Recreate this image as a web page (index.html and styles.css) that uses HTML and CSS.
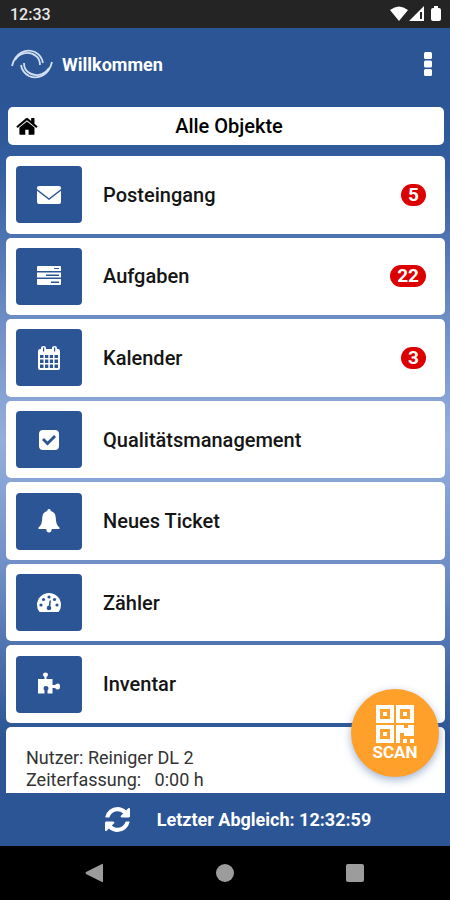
FILE: index.html
```html
<!DOCTYPE html>
<html lang="de">
<head>
<meta charset="utf-8">
<meta name="viewport" content="width=device-width, initial-scale=1">
<title>Willkommen</title>
<link rel="stylesheet" href="styles.css">
</head>
<body>
<div class="status">
  <span>12:33</span>
  <svg class="status-icons" viewBox="0 0 52 18" aria-hidden="true">
    <path d="M0 5Q9-2 18 5L9 16Z"/>
    <path fill-rule="evenodd" d="M34 1V16H19ZM30 7V14H32V7Z"/>
    <path d="M41 3H44V1H48V3H49Q51 3 51 5V14Q51 16 49 16H43Q41 16 41 14V5Q41 3 43 3Z"/>
  </svg>
</div>
<header class="header">
  <svg class="logo" viewBox="0 0 42 30" aria-hidden="true">
    <path d="M1 17C4 4 15-1 24 3Q31 7 32 14" stroke-width="1.8"/>
    <path d="M4 11C9 3 19 2 25 7Q29 10 29 16" stroke-width="1.8"/>
    <path d="M41 13C38 26 27 31 18 27Q11 23 10 16" stroke-width="1.800"/>
    <path d="M38 19C33 27 23 28 17 23Q13 20 13 14" stroke-width="1.800"/>
  </svg>
  <h1 class="title">Willkommen</h1>
  <button class="more" aria-label="Menü"><svg viewBox="0 0 8 24" aria-hidden="true"><rect width="8" height="7" rx="1.5"/><rect y="8.500" width="8" height="7" rx="1.500"/><rect y="17" width="8" height="7" rx="1.500"/></svg></button>
</header>
<main class="main">
  <button class="objects">
    <svg class="home" viewBox="60 190 1680 1350" aria-hidden="true"><path d="M1472 992v480q0 26-19 45t-45 19h-384v-384h-256v384h-384q-26 0-45-19t-19-45v-480q0-1 .5-3t.5-3l575-474 575 474q1 2 1 6zm223-69l-62 74q-8 9-21 11h-3q-13 0-21-7l-692-577-692 577q-12 8-24 7-13-2-21-11l-62-74q-8-10-7-23.500t11-21.500l719-599q32-26 76-26t76 26l244 204v-195q0-14 9-23t23-9h192q14 0 23 9t9 23v408l219 182q10 8 11 21.500t-7 23.500z"/></svg>
    <span>Alle Objekte</span>
  </button>
  <nav class="list">
    <a class="card" href="#posteingang">
      <span class="tile"><svg viewBox="0 0 24 24" aria-hidden="true"><path d="M2 3H22Q24 3 24 5V6L12 15.200L0 6V5Q0 3 2 3ZM0 7.800L12 17L24 7.800V19Q24 21 22 21H2Q0 21 0 19Z"/></svg></span>
      <span class="label">Posteingang</span><span class="badge">5</span>
    </a>
    <a class="card" href="#aufgaben">
      <span class="tile"><svg viewBox="0 0 24 24" aria-hidden="true"><path fill-rule="evenodd" d="M1 2H23Q24 2 24 3V7H0V3Q0 2 1 2ZM17 4V5H22V4ZM0 8.500H24V13.500H0ZM9 10.500V12H22V10.500ZM0 15H24V20Q24 21 23 21H1Q0 21 0 20ZM14 17.500V19H22V17.500Z"/></svg></span>
      <span class="label">Aufgaben</span><span class="badge">22</span>
    </a>
    <a class="card" href="#kalender">
      <span class="tile"><svg viewBox="0 0 24 24" aria-hidden="true"><path fill-rule="evenodd" d="M3 3H4V2Q4 0 6.500 0T9 2V3H15V2Q15 0 17.500 0T20 2V3H21Q23 3 23 5V22Q23 24 21 24H3Q1 24 1 22V5Q1 3 3 3ZM6 1.500V5.500H7.200V1.500ZM17 1.500V5.500H18.200V1.500ZM3 9V12H6.500V9ZM8 9V12H11.300V9ZM12.800 9V12H16V9ZM17.500 9V12H21V9ZM3 13.500V17H6.500V13.500ZM8 13.500V17H11.300V13.500ZM12.800 13.500V17H16V13.500ZM17.500 13.500V17H21V13.500ZM3 18.500V22H6.500V18.500ZM8 18.500V22H11.300V18.500ZM12.800 18.500V22H16V18.500ZM17.500 18.500V22H21V18.500Z"/></svg></span>
      <span class="label">Kalender</span><span class="badge">3</span>
    </a>
    <a class="card" href="#qualitaet">
      <span class="tile"><svg viewBox="0 0 24 24" aria-hidden="true"><path fill-rule="evenodd" d="M6 2H18Q22 2 22 6V18Q22 22 18 22H6Q2 22 2 18V6Q2 2 6 2ZM5 12L10.500 17.500L19 9L17 7L10.500 13.500L7 10Z"/></svg></span>
      <span class="label">Qualitätsmanagement</span>
    </a>
    <a class="card" href="#ticket">
      <span class="tile"><svg viewBox="0 0 24 24" aria-hidden="true"><path d="M12 0Q13.800 0 13.800 2Q18.800 3.300 18.800 9Q18.800 16 22.500 18.500V20H14.800Q14.500 23.500 12 23.500T9.200 20H1.500V18.500Q5.200 16 5.200 9Q5.200 3.300 10.200 2Q10.200 0 12 0Z"/></svg></span>
      <span class="label">Neues Ticket</span>
    </a>
    <a class="card" href="#zaehler">
      <span class="tile"><svg viewBox="0 0 24 24" aria-hidden="true"><path d="M2.500 21Q0 18 0 14A12 12 0 0 1 24 14Q24 18 21.500 21Z"/><g class="cut"><circle cx="4" cy="14" r="1.600"/><circle cx="6.500" cy="8.500" r="1.600"/><circle cx="12" cy="6" r="1.600"/><circle cx="17.500" cy="8.500" r="1.600"/><circle cx="20" cy="14" r="1.600"/><circle cx="12" cy="17" r="2.300"/><path d="M11.500 16L12.500 9.500H14L13 17Z"/></g></svg></span>
      <span class="label">Zähler</span>
    </a>
    <a class="card" href="#inventar">
      <span class="tile"><svg viewBox="0 0 24 24" aria-hidden="true"><path d="M1 7H7.500V5Q6 4 6 2.500Q6 .5 8.500 .5T11 2.500Q11 4 9.500 5V7H15.500V13H18Q19 11.500 21 11.500Q23 11.500 23 14.500T21 17.500Q19 17.500 18 16H15.500V21.500H10.500V18.500Q11.500 17.500 11.500 16Q11.500 14 9 14T6.500 16Q6.500 17.500 7.500 18.500V21.500H1Z"/></svg></span>
      <span class="label">Inventar</span>
    </a>
    <section class="info">
      <p>Nutzer: Reiniger DL 2</p>
      <p>Zeiterfassung: &nbsp; 0:00 h</p>
    </section>
  </nav>
  <button class="scan">
    <svg viewBox="0 0 38 38" aria-hidden="true"><path fill-rule="evenodd" d="M0 0H18V18H0ZM4 4V14H14V4ZM7 7H11V11H7ZM20 0H38V18H20ZM24 4V14H34V4ZM27 7H31V11H27ZM0 20H18V38H0ZM4 24V34H14V24ZM7 27H11V31H7ZM20 20H28V23H32V20H38V31H28V28H24V38H20ZM27 34H31V38H27ZM34 34H38V38H34Z"/></svg>
    <span>SCAN</span>
  </button>
</main>
<footer class="sync">
  <button class="sync-button">
    <svg viewBox="128 128 1536 1536" aria-hidden="true"><path d="M1639 1056q0 5-1 7-64 268-268 434.500t-478 166.500q-146 0-282.500-55t-243.500-157l-129 129q-19 19-45 19t-45-19-19-45v-448q0-26 19-45t45-19h448q26 0 45 19t19 45-19 45l-137 137q71 66 161 102t187 36q134 0 250-65t186-179q11-17 53-117 8-23 30-23h192q13 0 22.500 9.500t9.500 22.500zm25-800v448q0 26-19 45t-45 19h-448q-26 0-45-19t-19-45 19-45l138-138q-148-137-349-137-134 0-250 65t-186 179q-11 17-53 117-8 23-30 23h-199q-13 0-22.500-9.500t-9.500-22.500v-7q65-268 270-434.500t480-166.500q146 0 284 55.500t245 156.500l130-129q19-19 45-19t45 19 19 45z"/></svg>
    <span>Letzter Abgleich: 12:32:59</span>
  </button>
</footer>
<div class="navbar">
  <button aria-label="Zurück"><svg viewBox="0 0 20 20" aria-hidden="true"><path d="M17 1Q18 0 18 2V18Q18 20 17 19L1 11Q0 10 1 9Z"/></svg></button>
  <button aria-label="Startseite"><svg viewBox="0 0 20 20" aria-hidden="true"><circle cx="10" cy="10" r="9"/></svg></button>
  <button aria-label="Übersicht"><svg viewBox="0 0 20 20" aria-hidden="true"><rect x="1" y="1" width="18" height="18" rx="2"/></svg></button>
</div>
</body>
</html>
```
FILE: styles.css
```css
* { box-sizing: border-box; }

body {
  margin: 0;
  min-height: 100vh;
  display: flex;
  flex-direction: column;
  background: #2b5594;
  color: #151515;
  font-family: Roboto, "Liberation Sans", sans-serif;
}

button {
  margin: 0;
  padding: 0;
  border: 0;
  background: none;
  color: inherit;
  font: inherit;
}

svg { display: block; fill: currentColor; }

.status {
  height: 28px;
  padding: 0 8px 0 10px;
  display: flex;
  align-items: center;
  justify-content: space-between;
  background: #242424;
  color: #e8e8e8;
  font-size: 16px;
  font-weight: 500;
}

.status-icons { width: 52px; height: 18px; color: #fff; }

.header {
  height: 72px;
  padding: 0 18px 0 11px;
  display: flex;
  align-items: center;
  gap: 9px;
  color: #fff;
}

.logo {
  width: 42px;
  height: 30px;
  fill: none;
  stroke: #d3dff2;
}

.title {
  flex: 1;
  margin: 0;
  font-size: 18px;
  font-weight: 700;
}

.more svg { width: 8px; height: 24px; }

.main {
  position: relative;
  flex: 1;
  display: flex;
  flex-direction: column;
  padding: 7px 5px 0 6px;
  background: linear-gradient(#2b5594 0%, #335e9f 10%, #6f8ec6 32%, #95aedd 49%, #6f8ec6 68%, #2b5594 92%);
}

.objects {
  height: 38px;
  margin: 0 1px 11px 2px;
  padding: 0 8px;
  display: grid;
  grid-template-columns: 22px 1fr 16px;
  align-items: center;
  border-radius: 5px;
  background: #fff;
  color: #000;
  font-size: 20px;
  font-weight: 500;
}

.home { width: 22px; height: 18px; }

.list {
  flex: 1;
  display: flex;
  flex-direction: column;
  gap: 4px;
}

.card {
  flex: 1;
  min-height: 64px;
  padding: 0 19px 0 10px;
  display: flex;
  align-items: center;
  border-radius: 5px;
  background: #fff;
  color: inherit;
  text-decoration: none;
}

.tile {
  width: 66px;
  height: 57px;
  margin-right: 21px;
  display: grid;
  place-items: center;
  border-radius: 4px;
  background: #2b5594;
  color: #fff;
}

.tile svg { width: 24px; height: 24px; }
.cut { fill: #2b5594; }

.label {
  flex: 1;
  font-size: 20px;
  font-weight: 500;
}

.badge {
  min-width: 25px;
  padding: 0 7px;
  border-radius: 11px;
  background: #dc0000;
  color: #fff;
  font-size: 19px;
  font-weight: 700;
  line-height: 22px;
  text-align: center;
}

.info {
  height: 66px;
  padding: 20px 20px 0;
  border-radius: 5px 5px 0 0;
  background: #fff;
  color: #333;
  font-size: 18px;
  font-weight: 400;
  line-height: 22px;
}

.info p { margin: 0; }

.scan {
  position: absolute;
  right: 11px;
  bottom: 16px;
  width: 88px;
  height: 88px;
  display: flex;
  flex-direction: column;
  align-items: center;
  justify-content: center;
  border-radius: 50%;
  background: #ffa02b;
  box-shadow: 0 3px 8px #2b559470;
  color: #fff;
  font-size: 17px;
  font-weight: 700;
  line-height: 18px;
}

.scan svg { width: 38px; height: 38px; }

.sync {
  height: 53px;
  display: grid;
  place-items: center;
  color: #fff;
}

.sync-button {
  display: flex;
  align-items: center;
  gap: 27px;
  padding-left: 26px;
  font-size: 18px;
  font-weight: 700;
}

.sync-button svg { width: 25px; height: 25px; }

.navbar {
  height: 54px;
  padding: 0 30px;
  display: grid;
  grid-template-columns: repeat(3, 1fr);
  place-items: center;
  background: #000;
  color: #9c9c9c;
}

.navbar svg { width: 20px; height: 20px; }
```
